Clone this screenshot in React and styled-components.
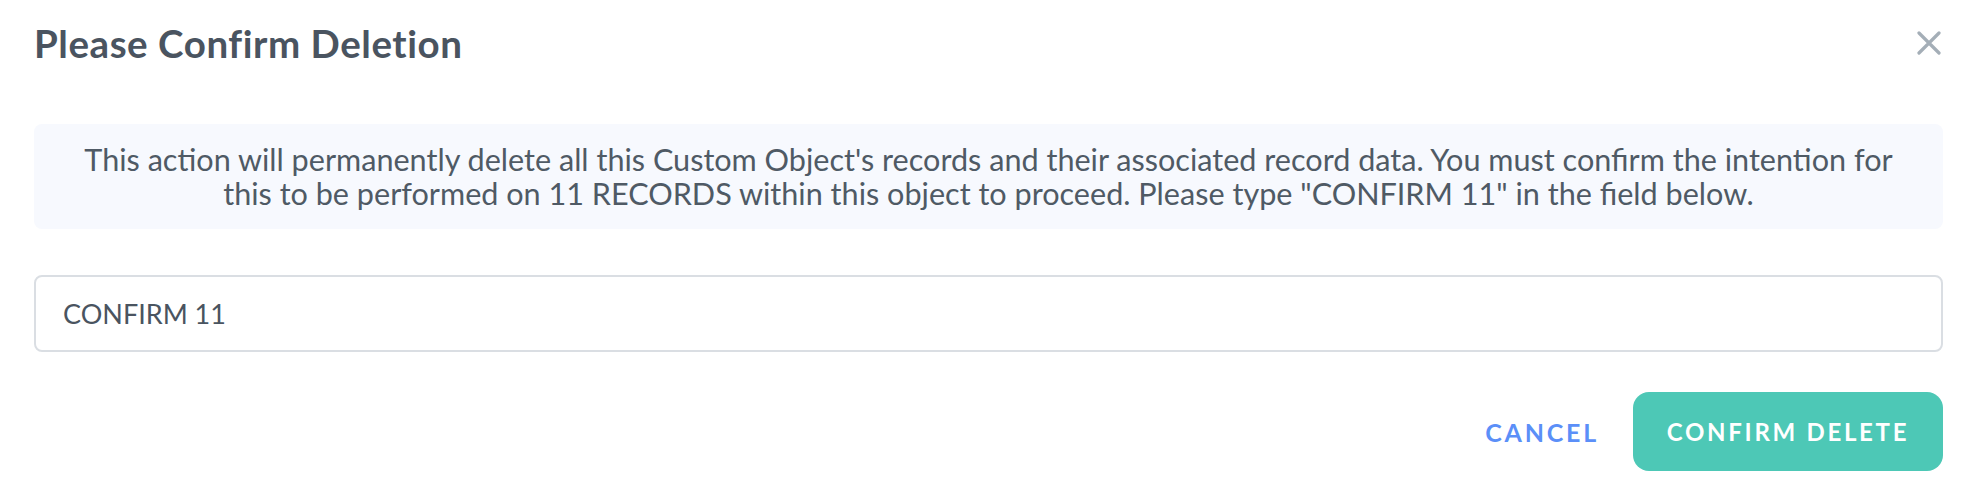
import React from "react";
import styled, { createGlobalStyle } from "styled-components";

const GlobalStyle = createGlobalStyle`
  html, body { margin: 0; padding: 0; background: #ffffff; }
  body { font-family: "Lato", "Open Sans", sans-serif; -webkit-font-smoothing: antialiased; }
  * { box-sizing: border-box; }
`;

const Modal = styled.div`
  width: 1970px;
  height: 498px;
  background: #ffffff;
  padding: 0 27px 0 34px;
  display: flex;
  flex-direction: column;
`;

const Header = styled.div`
  height: 96px;
  display: flex;
  align-items: center;
  justify-content: space-between;
  padding-bottom: 10px;
`;

const Title = styled.h2`
  margin: 0;
  font-size: 38.5px;
  font-weight: 700;
  color: #4a5460;
  letter-spacing: 0.55px;
`;

const CloseButton = styled.button`
  border: 0;
  background: transparent;
  padding: 0;
  width: 24px;
  height: 24px;
  display: flex;
  align-items: center;
  justify-content: center;
  cursor: pointer;
  margin-right: 2px;
`;

const Notice = styled.div`
  margin-top: 28px;
  background: #f7f9fe;
  border-radius: 8px;
  padding: 0 30px;
  height: 105px;
  display: flex;
  align-items: center;
  justify-content: center;
  text-align: center;
  font-size: 30.6px;
  line-height: 34px;
  color: #4f5a65;
`;

const Field = styled.input`
  margin-top: 46px;
  height: 77px;
  width: 100%;
  border: 2px solid #dadee3;
  border-radius: 8px;
  padding: 0 27px;
  font-family: inherit;
  font-size: 27px;
  color: #4a5460;
  background: #fff;
  outline: none;
`;

const Actions = styled.div`
  margin-top: 40px;
  display: flex;
  justify-content: flex-end;
  align-items: center;
  gap: 34px;
`;

const TextButton = styled.button`
  border: 0;
  background: transparent;
  padding: 0;
  font-family: inherit;
  font-size: 25px;
  font-weight: 700;
  letter-spacing: 2.8px;
  color: #5b8ff8;
  text-transform: uppercase;
  cursor: pointer;
`;

const PrimaryButton = styled.button`
  border: 0;
  width: 310px;
  height: 79px;
  border-radius: 16px;
  background: #4dc8b6;
  color: #ffffff;
  font-family: inherit;
  font-size: 24px;
  font-weight: 700;
  letter-spacing: 2.7px;
  text-transform: uppercase;
  cursor: pointer;
`;

function CloseIcon() {
  return (
    <svg width="24" height="24" viewBox="0 0 24 24" fill="none">
      <path d="M2 2 L22 22 M22 2 L2 22" stroke="#a4aeb7" strokeWidth="3.2" strokeLinecap="round" />
    </svg>
  );
}

export default function App() {
  return (
    <>
      <GlobalStyle />
      <Modal>
        <Header>
          <Title>Please Confirm Deletion</Title>
          <CloseButton aria-label="Close">
            <CloseIcon />
          </CloseButton>
        </Header>
        <Notice>
          <span>
            This action will permanently delete all this Custom Object's records and their associated record data. You must confirm the intention for
            <br />
            this to be performed on 11 RECORDS within this object to proceed. Please type "CONFIRM 11" in the field below.
          </span>
        </Notice>
        <Field defaultValue="CONFIRM 11" />
        <Actions>
          <TextButton>Cancel</TextButton>
          <PrimaryButton>Confirm Delete</PrimaryButton>
        </Actions>
      </Modal>
    </>
  );
}
